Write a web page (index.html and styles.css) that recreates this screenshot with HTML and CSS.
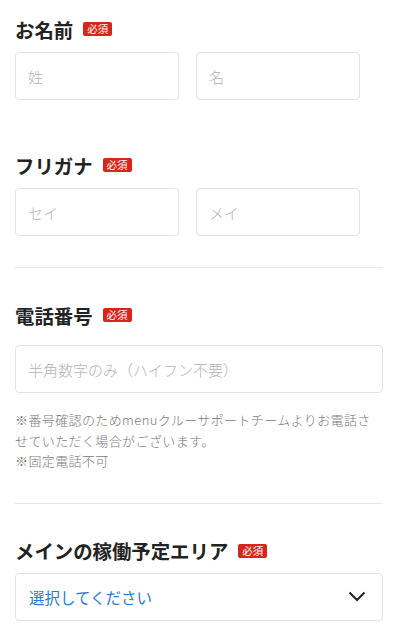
FILE: index.html
```html
<!DOCTYPE html>
<html lang="ja">
<head>
  <meta charset="utf-8">
  <title>登録フォーム</title>
  <link rel="stylesheet" href="styles.css">
</head>
<body>
  <form class="form">
    <div class="field field-name">
      <div class="label"><span>お名前</span><span class="badge">必須</span></div>
      <div class="pair">
        <input class="input half" type="text" placeholder="姓">
        <input class="input half" type="text" placeholder="名">
      </div>
    </div>

    <div class="field field-kana">
      <div class="label"><span>フリガナ</span><span class="badge">必須</span></div>
      <div class="pair">
        <input class="input half" type="text" placeholder="セイ">
        <input class="input half" type="text" placeholder="メイ">
      </div>
    </div>

    <hr class="divider">

    <div class="field field-tel">
      <div class="label"><span>電話番号</span><span class="badge">必須</span></div>
      <input class="input" type="tel" placeholder="半角数字のみ（ハイフン不要）">
      <p class="note">※番号確認のためmenuクルーサポートチームよりお電話させていただく場合がございます。<br>※固定電話不可</p>
    </div>

    <hr class="divider divider-tel">

    <div class="field field-area">
      <div class="label"><span>メインの稼働予定エリア</span><span class="badge">必須</span></div>
      <div class="select">
        <span>選択してください</span>
        <svg width="18" height="11" viewBox="0 0 18 11"><path d="M1.5 1.5 L9 9 L16.5 1.5" fill="none" stroke="#222" stroke-width="2"/></svg>
      </div>
    </div>
  </form>
</body>
</html>
```

FILE: styles.css
```css
body {
  margin: 0;
  font-family: "Noto Sans CJK JP", "Noto Sans", sans-serif;
  color: #222;
  background: #fff;
}
.form {
  padding: 17px 17px 0 15px;
}
.label {
  display: flex;
  align-items: center;
  gap: 10px;
  height: 24px;
  font-size: 19.4px;
  font-weight: bold;
  margin-bottom: 11px;
}
.badge {
  background: #d6261b;
  color: #fff;
  font-size: 10.5px;
  font-weight: normal;
  line-height: 14px;
  padding: 0 4px;
  border-radius: 2px;
}
.pair {
  display: flex;
  gap: 17px;
}
.input {
  box-sizing: border-box;
  display: block;
  width: 100%;
  height: 48px;
  padding: 0 12px;
  border: 1px solid #e2e2e2;
  border-radius: 4px;
  font-family: inherit;
  font-size: 15px;
  font-weight: 300;
  color: #222;
}
.input.half {
  width: 164px;
}
.input::placeholder {
  color: #b3b3b3;
}
.field-kana {
  margin-top: 53px;
}
.divider {
  border: 0;
  border-top: 1px solid #e6e6e6;
  margin: 31px 0 0;
}
.field-tel {
  margin-top: 35px;
}
.field-tel .label {
  margin-bottom: 18px;
}
.note {
  margin: 17px 0 0;
  font-size: 13px;
  font-weight: 300;
  line-height: 20.6px;
  letter-spacing: 0.03em;
  color: #7a7a7a;
}
.divider-tel {
  margin-top: 31px;
}
.field-area {
  margin-top: 35px;
}
.field-area .label {
  margin-bottom: 10px;
}
.select {
  box-sizing: border-box;
  display: flex;
  align-items: center;
  justify-content: space-between;
  height: 48px;
  padding: 0 16px 0 13px;
  border: 1px solid #e2e2e2;
  border-radius: 4px;
  font-size: 15.5px;
  color: #2b7bd3;
}
```
